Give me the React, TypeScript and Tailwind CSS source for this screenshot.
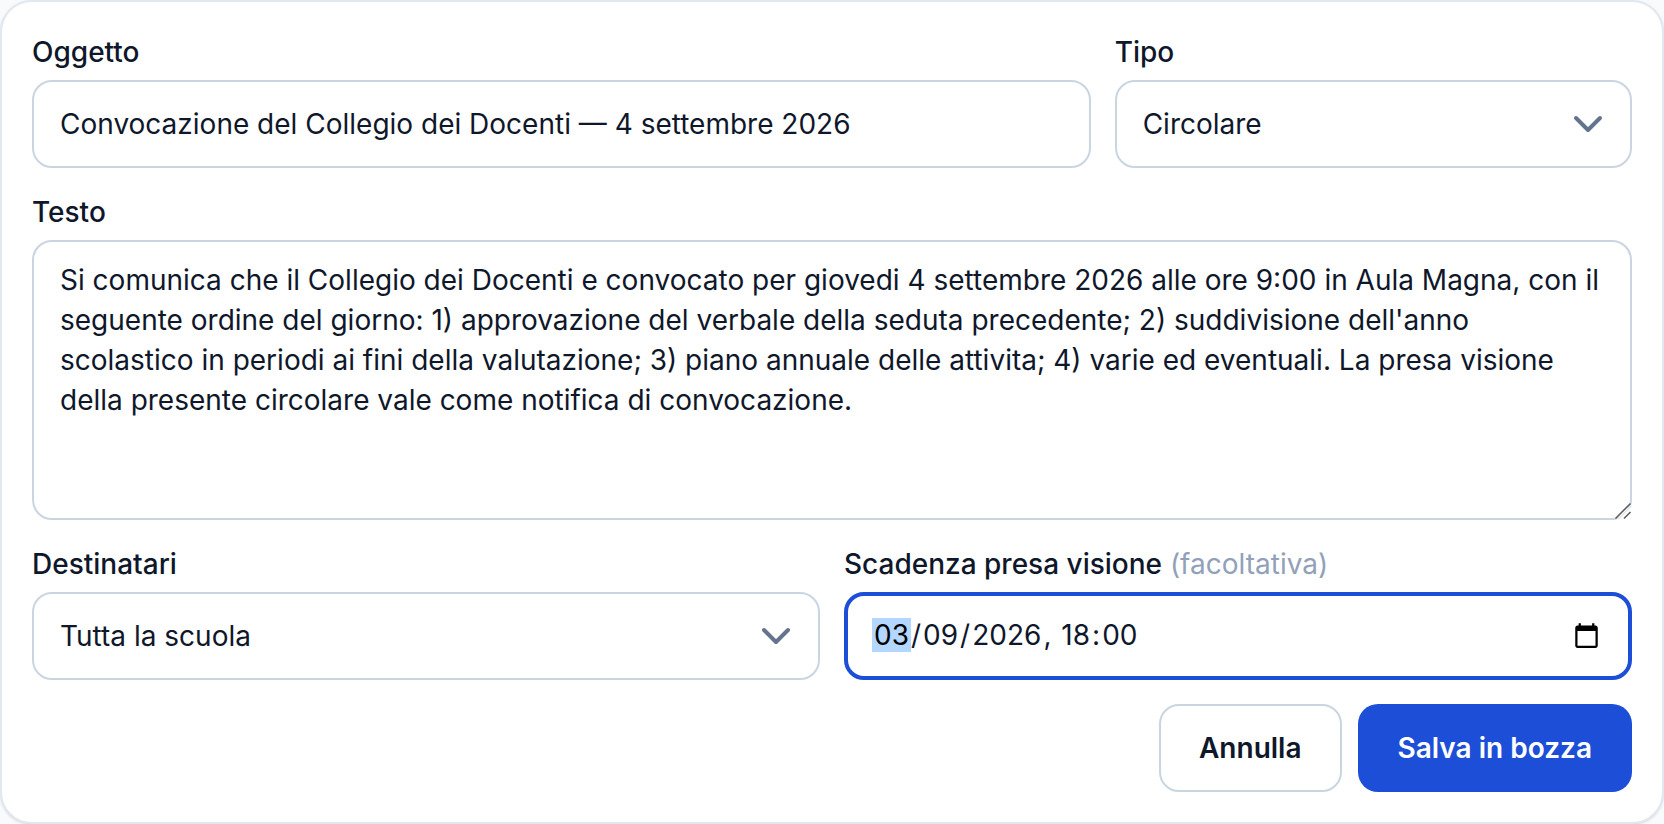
import type { ReactNode } from "react";

const control =
  "w-full rounded-[20px] border-2 border-slate-300 bg-white px-[26px] text-slate-900 outline-none focus:border-4 focus:border-[#1d4ed8] focus:px-6";

const segment =
  "field-sizing-content rounded-none bg-transparent px-[2px] leading-[34px] caret-transparent outline-none selection:bg-transparent focus:bg-[#b3d7ff] focus:text-black";

function Field({
  id,
  label,
  hint,
  className = "",
  children,
}: {
  id: string;
  label: string;
  hint?: string;
  className?: string;
  children: ReactNode;
}) {
  return (
    <div className={`flex min-w-0 flex-col gap-2 ${className}`}>
      <label htmlFor={id} className="font-medium">
        {label}
        {hint && <span className="font-normal text-slate-400"> {hint}</span>}
      </label>
      {children}
    </div>
  );
}

function Select({ id, options }: { id: string; options: string[] }) {
  return (
    <div className="relative">
      <select id={id} className={`h-[88px] appearance-none pr-20 ${control}`}>
        {options.map((option) => (
          <option key={option}>{option}</option>
        ))}
      </select>
      <svg
        viewBox="0 0 16 16"
        aria-hidden="true"
        className="pointer-events-none absolute inset-y-0 right-7 my-auto size-8 fill-none stroke-slate-500 stroke-2"
        strokeLinecap="round"
        strokeLinejoin="round"
      >
        <path d="m2 5 6 6 6-6" />
      </svg>
    </div>
  );
}

function DateTimeField({ id }: { id: string }) {
  return (
    <div
      role="group"
      aria-label="Scadenza presa visione"
      className="flex h-[88px] items-start rounded-[20px] border-2 border-slate-300 bg-white px-[26px] py-6 leading-[34px] focus-within:border-4 focus-within:border-[#1d4ed8] focus-within:px-6 focus-within:py-[22px]"
    >
      <input id={id} className={segment} defaultValue="03" maxLength={2} inputMode="numeric" autoFocus />
      <span>/</span>
      <input aria-label="Mese" className={segment} defaultValue="09" maxLength={2} inputMode="numeric" />
      <span>/</span>
      <input aria-label="Anno" className={segment} defaultValue="2026" maxLength={4} inputMode="numeric" />
      <span className="whitespace-pre">, </span>
      <input aria-label="Ore" className={segment} defaultValue="18" maxLength={2} inputMode="numeric" />
      <span>:</span>
      <input aria-label="Minuti" className={segment} defaultValue="00" maxLength={2} inputMode="numeric" />
      <button type="button" aria-label="Apri calendario" className="mr-1 ml-auto flex h-[34px] items-center">
        <svg viewBox="0 0 24 24" className="size-[27px] fill-black" aria-hidden="true">
          <path d="M20 3h-1V1h-2v2H7V1H5v2H4c-1.1 0-2 .9-2 2v16c0 1.1.9 2 2 2h16c1.1 0 2-.9 2-2V5c0-1.1-.9-2-2-2zm0 18H4V8h16v13z" />
        </svg>
      </button>
    </div>
  );
}

const testo =
  "Si comunica che il Collegio dei Docenti e convocato per giovedi 4 settembre 2026 alle ore 9:00 in Aula Magna, con il seguente ordine del giorno: 1) approvazione del verbale della seduta precedente; 2) suddivisione dell'anno scolastico in periodi ai fini della valutazione; 3) piano annuale delle attivita; 4) varie ed eventuali. La presa visione della presente circolare vale come notifica di convocazione.";

export default function App() {
  return (
    <main className="bg-slate-50 font-['Inter',sans-serif] text-[28px] leading-[40px] text-slate-900">
      <form
        className="flex flex-col gap-6 rounded-[32px] border-2 border-slate-200 bg-white p-[30px] shadow-sm"
        onSubmit={(event) => event.preventDefault()}
      >
        <div className="grid grid-cols-3 gap-6">
          <Field id="oggetto" label="Oggetto" className="col-span-2">
            <input
              id="oggetto"
              type="text"
              className={`h-[88px] ${control}`}
              defaultValue="Convocazione del Collegio dei Docenti — 4 settembre 2026"
            />
          </Field>
          <Field id="tipo" label="Tipo">
            <Select id="tipo" options={["Circolare", "Avviso", "Comunicazione"]} />
          </Field>
        </div>

        <Field id="testo" label="Testo">
          <div className="relative">
            <textarea
              id="testo"
              rows={6}
              spellCheck={false}
              className={`block resize-none py-[18px] focus:py-4 ${control}`}
              defaultValue={testo}
            />
            <svg
              viewBox="0 0 18 18"
              aria-hidden="true"
              className="pointer-events-none absolute right-0 bottom-0 size-[18px] fill-none"
            >
              <path d="M18 2v16H2z" fill="#fff" />
              <path d="M1.5 16.5l15-15M10 16.5l6.500-6.500" stroke="#5f5f5f" strokeWidth="1.600" />
              <path d="M4 17.500L17.500 4" stroke="#cbd5e1" strokeWidth="1" />
            </svg>
          </div>
        </Field>

        <div className="grid grid-cols-2 gap-6">
          <Field id="destinatari" label="Destinatari">
            <Select id="destinatari" options={["Tutta la scuola", "Docenti", "Famiglie"]} />
          </Field>
          <Field id="scadenza" label="Scadenza presa visione" hint="(facoltativa)">
            <DateTimeField id="scadenza" />
          </Field>
        </div>

        <div className="flex justify-end gap-4">
          <button
            type="button"
            className="h-[88px] rounded-[20px] border-2 border-slate-300 bg-white px-[38px] font-semibold"
          >
            Annulla
          </button>
          <button type="submit" className="h-[88px] rounded-[20px] bg-[#1d4ed8] px-10 font-semibold text-white">
            Salva in bozza
          </button>
        </div>
      </form>
    </main>
  );
}
